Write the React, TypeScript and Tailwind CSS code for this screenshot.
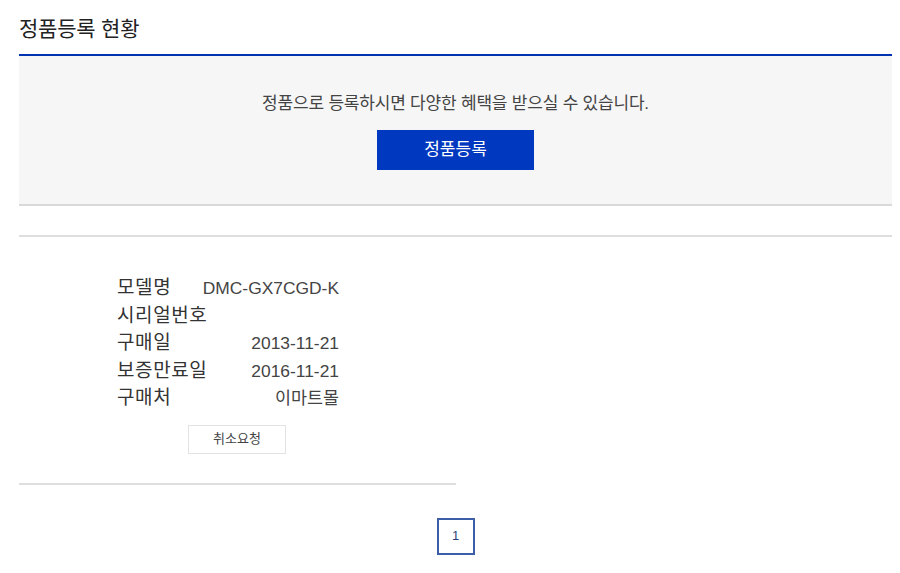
import React from 'react';

const rows: { label: string; value: string }[] = [
  { label: '모델명', value: 'DMC-GX7CGD-K' },
  { label: '시리얼번호', value: '' },
  { label: '구매일', value: '2013-11-21' },
  { label: '보증만료일', value: '2016-11-21' },
  { label: '구매처', value: '이마트몰' },
];

export default function App(): React.ReactElement {
  return (
    <div className="w-[900px] h-[573px] bg-white font-['Liberation_Sans','Noto_Sans_CJK_KR',sans-serif] text-[#333]">
      <div className="ml-[19px] w-[873px]">
        <h2 className="pt-[14px] h-[54px] text-[21px] leading-[30px] tracking-[-0.2px] text-[#222]">정품등록 현황</h2>
        <section className="border-t-2 border-[#0033b0] border-b-2 border-b-[#d9d9d9] bg-[#f6f6f6] h-[152px] flex flex-col items-center">
          <p className="mt-[36px] text-[17px] leading-[24px] tracking-[-0.2px] text-[#444]">
            정품으로 등록하시면 다양한 혜택을 받으실 수 있습니다.
          </p>
          <button className="mt-[14px] w-[157px] h-[40px] bg-[#0039c0] text-white text-[17px]">
            정품등록
          </button>
        </section>

        <div className="mt-[29px] border-t-2 border-[#dedede]" />

        <div className="w-[437px] border-b-2 border-[#dedede] pt-[38px] pb-[29px]">
          <dl className="ml-[98px] w-[222px] grid grid-cols-[80px_142px] gap-y-[1px] whitespace-nowrap">
            {rows.map((r) => (
              <React.Fragment key={r.label}>
                <dt className="text-[19px] leading-[26.5px] text-[#333] tracking-[0.6px]">{r.label}</dt>
                <dd className="text-[17.4px] leading-[26.5px] text-[#444] text-right">{r.value}</dd>
              </React.Fragment>
            ))}
          </dl>
          <div className="mt-[13px] ml-[169px]">
            <button className="w-[98px] h-[29px] border border-[#e3e3e3] bg-white text-[13px] text-[#444]">
              취소요청
            </button>
          </div>
        </div>

        <nav className="mt-[33px] flex justify-center">
          <span className="w-[38px] h-[37px] border-2 border-[#3c5ea8] flex items-center justify-center text-[13px] text-[#2a3f7a]">
            1
          </span>
        </nav>
      </div>
    </div>
  );
}
